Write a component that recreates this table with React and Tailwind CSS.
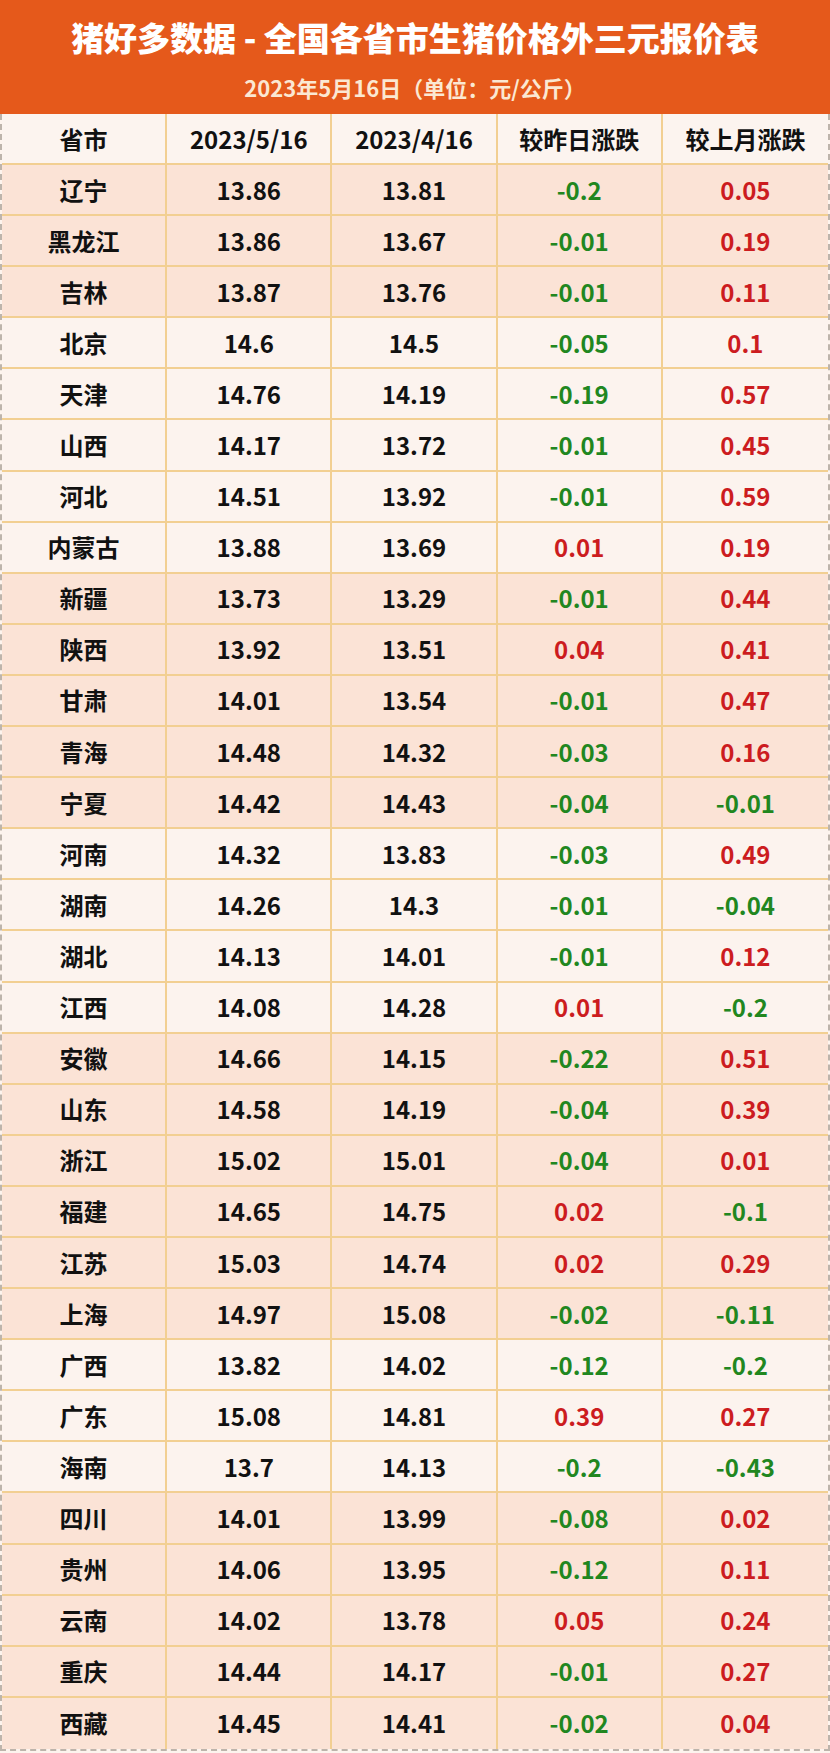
import React from 'react';

const rows = [
  ['辽宁', '13.86', '13.81', '-0.2', '0.05', 1],
  ['黑龙江', '13.86', '13.67', '-0.01', '0.19', 1],
  ['吉林', '13.87', '13.76', '-0.01', '0.11', 1],
  ['北京', '14.6', '14.5', '-0.05', '0.1', 0],
  ['天津', '14.76', '14.19', '-0.19', '0.57', 0],
  ['山西', '14.17', '13.72', '-0.01', '0.45', 0],
  ['河北', '14.51', '13.92', '-0.01', '0.59', 0],
  ['内蒙古', '13.88', '13.69', '0.01', '0.19', 0],
  ['新疆', '13.73', '13.29', '-0.01', '0.44', 1],
  ['陕西', '13.92', '13.51', '0.04', '0.41', 1],
  ['甘肃', '14.01', '13.54', '-0.01', '0.47', 1],
  ['青海', '14.48', '14.32', '-0.03', '0.16', 1],
  ['宁夏', '14.42', '14.43', '-0.04', '-0.01', 1],
  ['河南', '14.32', '13.83', '-0.03', '0.49', 0],
  ['湖南', '14.26', '14.3', '-0.01', '-0.04', 0],
  ['湖北', '14.13', '14.01', '-0.01', '0.12', 0],
  ['江西', '14.08', '14.28', '0.01', '-0.2', 0],
  ['安徽', '14.66', '14.15', '-0.22', '0.51', 1],
  ['山东', '14.58', '14.19', '-0.04', '0.39', 1],
  ['浙江', '15.02', '15.01', '-0.04', '0.01', 1],
  ['福建', '14.65', '14.75', '0.02', '-0.1', 1],
  ['江苏', '15.03', '14.74', '0.02', '0.29', 1],
  ['上海', '14.97', '15.08', '-0.02', '-0.11', 1],
  ['广西', '13.82', '14.02', '-0.12', '-0.2', 0],
  ['广东', '15.08', '14.81', '0.39', '0.27', 0],
  ['海南', '13.7', '14.13', '-0.2', '-0.43', 0],
  ['四川', '14.01', '13.99', '-0.08', '0.02', 1],
  ['贵州', '14.06', '13.95', '-0.12', '0.11', 1],
  ['云南', '14.02', '13.78', '0.05', '0.24', 1],
  ['重庆', '14.44', '14.17', '-0.01', '0.27', 1],
  ['西藏', '14.45', '14.41', '-0.02', '0.04', 1],
];

const headers = ['省市', '2023/5/16', '2023/4/16', '较昨日涨跌', '较上月涨跌'];

const Change = ({ value }) => (
  <span className={value.startsWith('-') ? 'text-[#21871f]' : 'text-[#cc1c1f]'}>{value}</span>
);

export default function App() {
  return (
    <div
      className="w-[830px] h-[1753px] overflow-hidden bg-[#fdf4ee] font-bold text-[#111]"
      style={{ fontFamily: '"Noto Sans CJK SC", "Noto Sans", sans-serif' }}
    >
      {/* title band */}
      <div className="h-[114px] bg-[#e5591b] flex flex-col items-center">
        <div className="mt-[14px] text-[33px] leading-[46px] font-black text-white">
          猪好多数据 - 全国各省市生猪价格外三元报价表
        </div>
        <div className="mt-[12px] text-[22px] leading-[30px] text-[#fbe8d2]">
          2023年5月16日（单位：元/公斤）
        </div>
      </div>

      <div className="border-x-2 border-b-2 border-dashed border-[#bdb4ab]">
        {/* header row */}
        <div className="grid grid-cols-5 h-[51px] bg-[#fcf4ef] border-b-2 border-[#f2cf92]">
          {headers.map((h, i) => (
            <div
              key={h}
              className={`flex items-center justify-center text-[24px] ${i < 4 ? 'border-r-2 border-[#f2cf92]' : ''}`}
            >
              {h}
            </div>
          ))}
        </div>

        {rows.map(([name, cur, prev, day, month, peach], idx) => (
          <div
            key={name}
            className={`grid grid-cols-5 h-[51.1px] text-[24px] ${peach ? 'bg-[#fbe3d6]' : 'bg-[#fcf3ee]'} ${idx < rows.length - 1 ? 'border-b-2 border-[#f2cf92]' : ''}`}
          >
            <div className="flex items-center justify-center border-r-2 border-[#f2cf92]">{name}</div>
            <div className="flex items-center justify-center border-r-2 border-[#f2cf92]">{cur}</div>
            <div className="flex items-center justify-center border-r-2 border-[#f2cf92]">{prev}</div>
            <div className="flex items-center justify-center border-r-2 border-[#f2cf92]">
              <Change value={day} />
            </div>
            <div className="flex items-center justify-center">
              <Change value={month} />
            </div>
          </div>
        ))}
      </div>
    </div>
  );
}
